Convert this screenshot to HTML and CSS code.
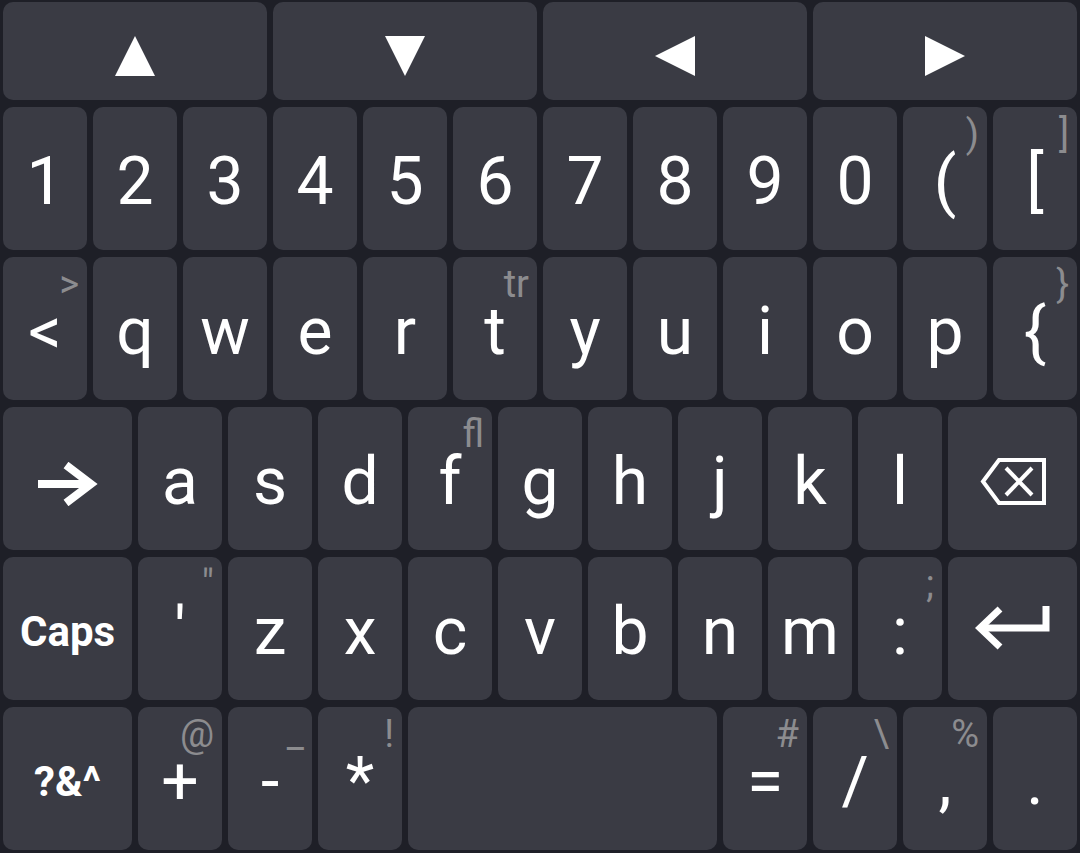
FILE: index.html
```html
<!DOCTYPE html>
<html lang="en">

<head>
    <meta charset="UTF-8">
    <meta name="viewport" content="width=device-width, initial-scale=1.0">
    <title>Keyboard</title>
    <link rel="stylesheet" href="styles.css">
</head>

<body>
    <div class="keyboard">
        <!-- arrow row -->
        <div class="key wide6 nav"><svg width="40" height="40" viewBox="0 0 40 40"><polygon points="20,0 40,40 0,40" /></svg></div>
        <div class="key wide6 nav"><svg width="40" height="40" viewBox="0 0 40 40"><polygon points="0,0 40,0 20,40" /></svg></div>
        <div class="key wide6 nav"><svg width="40" height="40" viewBox="0 0 40 40"><polygon points="0,20 40,0 40,40" /></svg></div>
        <div class="key wide6 nav"><svg width="40" height="40" viewBox="0 0 40 40"><polygon points="0,0 40,20 0,40" /></svg></div>

        <!-- numbers -->
        <div class="key">1</div>
        <div class="key">2</div>
        <div class="key">3</div>
        <div class="key">4</div>
        <div class="key">5</div>
        <div class="key">6</div>
        <div class="key">7</div>
        <div class="key">8</div>
        <div class="key">9</div>
        <div class="key">0</div>
        <div class="key">(<span class="alt">)</span></div>
        <div class="key">[<span class="alt">]</span></div>

        <!-- qwerty -->
        <div class="key">&lt;<span class="alt">&gt;</span></div>
        <div class="key">q</div>
        <div class="key">w</div>
        <div class="key">e</div>
        <div class="key">r</div>
        <div class="key">t<span class="alt">tr</span></div>
        <div class="key">y</div>
        <div class="key">u</div>
        <div class="key">i</div>
        <div class="key">o</div>
        <div class="key">p</div>
        <div class="key">{<span class="alt">}</span></div>

        <!-- home row -->
        <div class="key wide3">
            <svg class="tab" width="60" height="44" viewBox="0 0 60 44" fill="none" stroke="#fff" stroke-width="8">
                <line x1="0" y1="22" x2="52" y2="22" />
                <polyline points="28,3 53,22 28,41" />
            </svg>
        </div>
        <div class="key">a</div>
        <div class="key">s</div>
        <div class="key">d</div>
        <div class="key">f<span class="alt">fl</span></div>
        <div class="key">g</div>
        <div class="key">h</div>
        <div class="key">j</div>
        <div class="key">k</div>
        <div class="key">l</div>
        <div class="key wide3">
            <svg class="bksp" width="66" height="47" viewBox="0 0 66 47" fill="none" stroke="#fff" stroke-width="4">
                <polygon points="3,23.5 19,2 64,2 64,45 19,45" />
                <line x1="26" y1="10" x2="52" y2="37" />
                <line x1="52" y1="10" x2="26" y2="37" />
            </svg>
        </div>

        <!-- bottom letters -->
        <div class="key wide3 bold">Caps</div>
        <div class="key">'<span class="alt">"</span></div>
        <div class="key">z</div>
        <div class="key">x</div>
        <div class="key">c</div>
        <div class="key">v</div>
        <div class="key">b</div>
        <div class="key">n</div>
        <div class="key">m</div>
        <div class="key">:<span class="alt">;</span></div>
        <div class="key wide3">
            <svg class="enter" width="76" height="48" viewBox="0 0 76 48" fill="none" stroke="#fff" stroke-width="7">
                <polyline points="71,2 71,24 6,24" />
                <polyline points="25,5 5,24 25,43" />
            </svg>
        </div>

        <!-- symbols -->
        <div class="key wide3 bold">?&amp;^</div>
        <div class="key">+<span class="alt">@</span></div>
        <div class="key">-<span class="alt">_</span></div>
        <div class="key">*<span class="alt">!</span></div>
        <div class="key wide7"></div>
        <div class="key">=<span class="alt">#</span></div>
        <div class="key">/<span class="alt">\</span></div>
        <div class="key">,<span class="alt">%</span></div>
        <div class="key">.</div>
    </div>
</body>

</html>
```

FILE: styles.css
```css
* {
    margin: 0;
    padding: 0;
    box-sizing: border-box;
}

body {
    background: #1e1f27;
    font-family: Roboto, "Liberation Sans", sans-serif;
}

/* 24 half columns so the 1.5 wide keys fit */
.keyboard {
    display: grid;
    grid-template-columns: repeat(24, 1fr);
    grid-template-rows: 98px repeat(5, 143px);
    column-gap: 6px;
    row-gap: 7px;
    padding: 2px 3px 3px;
    height: 853px;
}

.key {
    grid-column: span 2;
    position: relative;
    display: flex;
    align-items: center;
    justify-content: center;
    padding-top: 6px;
    background: #3a3b44;
    border-radius: 10px;
    color: #fff;
    font-size: 66px;
    line-height: 1;
}

.wide3 {
    grid-column: span 3;
}

.wide6 {
    grid-column: span 6;
}

.wide7 {
    grid-column: span 7;
}

.nav {
    padding-top: 10px;
}

.nav svg {
    fill: #fff;
}

.bold {
    font-size: 42px;
    font-weight: 700;
}

.alt {
    position: absolute;
    top: 8px;
    right: 8px;
    color: #8c8c8f;
    font-size: 38px;
    line-height: 1;
}

.tab {
    margin-top: 4px;
}

.enter {
    margin-top: -8px;
}
```
